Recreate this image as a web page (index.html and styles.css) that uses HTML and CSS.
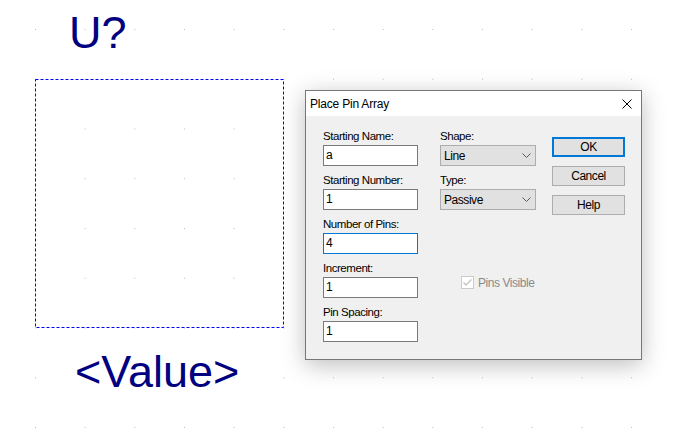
FILE: index.html
```html
<!DOCTYPE html>
<html>
<head>
<meta charset="utf-8">
<title>Place Pin Array</title>
<link rel="stylesheet" href="styles.css">
</head>
<body>
<div class="sheet">
  <svg class="grid" width="673" height="439">
    <defs>
      <pattern id="dots" patternUnits="userSpaceOnUse" x="35" y="29" width="49.67" height="49.75">
        <rect width="1" height="1" fill="#bcbcbc" shape-rendering="crispEdges"/>
      </pattern>
    </defs>
    <rect width="673" height="439" fill="url(#dots)"/>
  </svg>

  <div class="designator">U?</div>
  <svg class="outline" width="250" height="250">
    <rect x="0.5" y="0.5" width="248" height="248" fill="none" stroke="#0000ff" stroke-width="1" stroke-dasharray="3 2"/>
  </svg>
  <div class="value">&lt;Value&gt;</div>

  <div class="dialog">
    <div class="titlebar">
      <span class="title">Place Pin Array</span>
      <svg class="close" width="10" height="10" viewBox="0 0 10 10">
        <path d="M0.5 0.5 L9.5 9.5 M9.5 0.5 L0.5 9.5" stroke="#000" stroke-width="1" fill="none"/>
      </svg>
    </div>
    <div class="dlg-body">
      <div class="col col-fields">
        <div class="field">
          <div class="label">Starting Name:</div>
          <div class="input">a</div>
        </div>
        <div class="field">
          <div class="label">Starting Number:</div>
          <div class="input">1</div>
        </div>
        <div class="field">
          <div class="label">Number of Pins:</div>
          <div class="input focused">4</div>
        </div>
        <div class="field">
          <div class="label">Increment:</div>
          <div class="input">1</div>
        </div>
        <div class="field">
          <div class="label">Pin Spacing:</div>
          <div class="input">1</div>
        </div>
      </div>
      <div class="col col-mid">
        <div class="field">
          <div class="label">Shape:</div>
          <div class="combo"><span>Line</span>
            <svg class="chev" width="9" height="5" viewBox="0 0 9 5"><path d="M0.5 0.5 L4.5 4.5 L8.5 0.5" stroke="#5a5a5a" stroke-width="1" fill="none"/></svg>
          </div>
        </div>
        <div class="field">
          <div class="label">Type:</div>
          <div class="combo"><span>Passive</span>
            <svg class="chev" width="9" height="5" viewBox="0 0 9 5"><path d="M0.5 0.5 L4.5 4.5 L8.5 0.5" stroke="#5a5a5a" stroke-width="1" fill="none"/></svg>
          </div>
        </div>
        <div class="check-row">
          <span class="checkbox">
            <svg width="11" height="11" viewBox="0 0 11 11"><path d="M1.5 5.5 L4 8 L9.5 2.5" stroke="#c4c4c4" stroke-width="1.4" fill="none"/></svg>
          </span>
          <span class="check-label">Pins Visible</span>
        </div>
      </div>
      <div class="col col-buttons">
        <div class="btn default">OK</div>
        <div class="btn">Cancel</div>
        <div class="btn">Help</div>
      </div>
    </div>
  </div>
</div>
</body>
</html>
```

FILE: styles.css
```css
html, body {
  margin: 0;
  padding: 0;
  background: #ffffff;
}

.sheet {
  position: relative;
  width: 673px;
  height: 439px;
  overflow: hidden;
  background: #ffffff;
}

.grid {
  position: absolute;
  left: 0;
  top: 0;
}

.designator,
.value {
  position: absolute;
  font-family: "Liberation Sans", Arial, sans-serif;
  font-size: 45px;
  line-height: 1;
  color: #000080;
  white-space: nowrap;
}

.designator {
  left: 69px;
  top: 10px;
}

.value {
  left: 75px;
  top: 349px;
}

.outline {
  position: absolute;
  left: 35px;
  top: 79px;
}

/* dialog window */
.dialog {
  position: absolute;
  left: 305px;
  top: 90px;
  width: 337px;
  height: 270px;
  box-sizing: border-box;
  border: 1px solid #777777;
  background: #f0f0f0;
  box-shadow: 0 5px 22px rgba(0, 0, 0, 0.26);
  display: flex;
  flex-direction: column;
  font-family: "Liberation Sans", Arial, sans-serif;
  color: #000;
}

.titlebar {
  height: 25px;
  flex: none;
  background: #ffffff;
  display: flex;
  align-items: center;
  justify-content: space-between;
  padding: 0 9px 0 4px;
}

.title {
  font-size: 12px;
  letter-spacing: -0.2px;
}

.close {
  display: block;
}

.dlg-body {
  display: flex;
  align-items: flex-start;
  padding: 14px 0 0 17px;
  font-size: 11.5px;
  letter-spacing: -0.45px;
}

.col {
  display: flex;
  flex-direction: column;
}

.col-fields {
  width: 95px;
  gap: 8px;
}

.col-mid {
  width: 96px;
  margin-left: 22px;
  gap: 8px;
}

.col-buttons {
  width: 73px;
  margin-left: 16px;
  padding-top: 7px;
  gap: 9px;
}

.label {
  line-height: 13px;
  margin-bottom: 2px;
  white-space: nowrap;
}

.input {
  height: 21px;
  box-sizing: border-box;
  border: 1px solid #7a7a7a;
  background: #ffffff;
  padding-left: 2px;
  line-height: 19px;
  font-size: 12px;
}

.input.focused {
  border-color: #0078d7;
}

.combo {
  height: 21px;
  box-sizing: border-box;
  border: 1px solid #adadad;
  background: #e1e1e1;
  display: flex;
  align-items: center;
  justify-content: space-between;
  padding: 0 4px 0 3px;
  font-size: 12px;
}

.chev {
  display: block;
}

.check-row {
  margin-top: 58px;
  margin-left: 21px;
  height: 13px;
  display: flex;
  align-items: center;
  gap: 4px;
}

.checkbox {
  width: 13px;
  height: 13px;
  box-sizing: border-box;
  border: 1px solid #cccccc;
  background: #ffffff;
  display: flex;
  align-items: center;
  justify-content: center;
}

.checkbox svg {
  display: block;
}

.check-label {
  color: #8a8a8a;
  font-size: 12px;
}

.btn {
  height: 20px;
  box-sizing: border-box;
  border: 1px solid #adadad;
  background: #e1e1e1;
  text-align: center;
  line-height: 18px;
  font-size: 12px;
}

.btn.default {
  border: 2px solid #0078d7;
  line-height: 16px;
}
```
